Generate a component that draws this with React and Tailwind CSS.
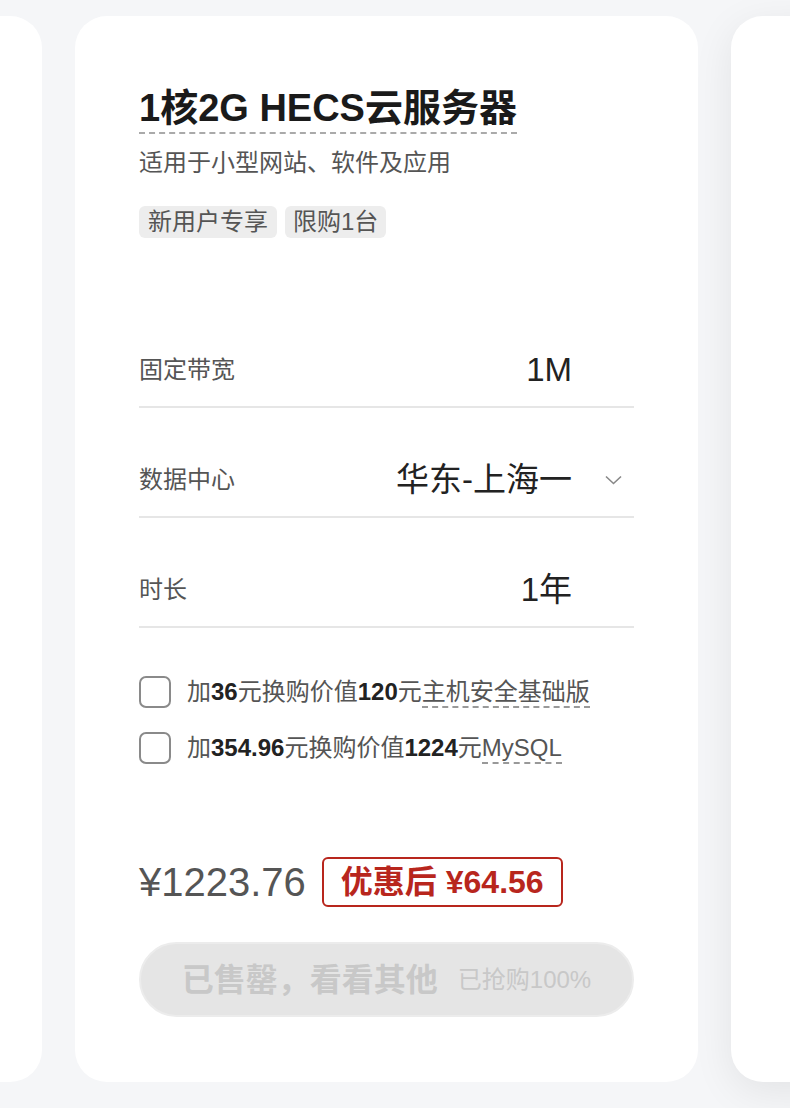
import React from 'react';

const font = { fontFamily: '"Liberation Sans", "Noto Sans CJK SC", sans-serif' };

// 配置行：左边标签，右边取值，可选下拉箭头
const SpecRow = ({ label, value, dropdown }) => (
    <div className="flex items-center justify-between h-[110px] pt-[52px] pb-[16px] border-b-2 border-[#e6e6e6]">
        <span className="text-[24px] leading-[40px] text-[#555]">{label}</span>
        <div className="flex items-center">
            <span className="text-[33px] leading-[40px] text-[#222]">{value}</span>
            <div className="w-[62px] flex justify-end pr-[12px]">
                {dropdown && (
                    <svg width="17" height="10" viewBox="0 0 17 10" fill="none">
                        <path d="M1 1.5L8.5 8.5L16 1.5" stroke="#888" strokeWidth="1.6" />
                    </svg>
                )}
            </div>
        </div>
    </div>
);

const Check = ({ children }) => (
    <label className="flex items-center h-[32px]">
        <span className="w-[32px] h-[32px] rounded-[7px] border-2 border-[#8a8a8a] bg-white shrink-0" />
        <span className="ml-[16px] text-[24px] leading-[32px] text-[#555] whitespace-nowrap">{children}</span>
    </label>
);

const Dashed = ({ children }) => (
    <span className="border-b-2 border-dashed border-[#999] leading-[28px] inline-block">{children}</span>
);

export default function App() {
    return (
        <div className="min-h-[1108px] bg-[#f5f6f8] overflow-hidden" style={font}>
            <div className="flex gap-[33px] pt-[16px]">
                {/* 左侧露出的卡片 */}
                <div className="w-[623px] h-[1066px] -ml-[581px] bg-white rounded-[32px] shrink-0" />

                {/* 中间卡片 */}
                <div className="w-[623px] h-[1066px] bg-white rounded-[32px] shrink-0 px-[64px] pt-[68px]">
                    <h2 className="inline-block text-[38px] leading-[48px] font-bold text-[#1a1a1a] border-b-2 border-dashed border-[#aaa]">
                        1核2G HECS云服务器
                    </h2>
                    <p className="mt-[13px] text-[24px] leading-[32px] text-[#555]">适用于小型网站、软件及应用</p>
                    <div className="flex gap-[8px] mt-[27px]">
                        <span className="px-[9px] h-[32px] leading-[32px] rounded-[6px] bg-[#ededed] text-[24px] text-[#555]">新用户专享</span>
                        <span className="px-[8px] h-[32px] leading-[32px] rounded-[6px] bg-[#ededed] text-[24px] text-[#555]">限购1台</span>
                    </div>

                    <div className="mt-[60px]">
                        <SpecRow label="固定带宽" value="1M" />
                        <SpecRow label="数据中心" value="华东-上海一" dropdown />
                        <SpecRow label="时长" value="1年" />
                    </div>

                    <div className="mt-[48px] flex flex-col gap-[24px]">
                        <Check>
                            加<b className="text-[#222]">36</b>元换购价值<b className="text-[#222]">120</b>元<Dashed>主机安全基础版</Dashed>
                        </Check>
                        <Check>
                            加<b className="text-[#222]">354.96</b>元换购价值<b className="text-[#222]">1224</b>元<Dashed>MySQL</Dashed>
                        </Check>
                    </div>

                    <div className="mt-[93px] flex items-center">
                        <span className="text-[40px] leading-[50px] text-[#555]">¥1223.76</span>
                        <span className="ml-[16px] h-[50px] px-[17px] flex items-center border-2 border-[#b8261d] rounded-[6px] text-[32px] font-bold text-[#b8261d]">
                            优惠后 ¥64.56
                        </span>
                    </div>

                    <div className="mt-[35px] h-[75px] rounded-full bg-[#e5e5e5] border-2 border-[#ececec] flex items-center justify-center">
                        <span className="text-[32px] font-bold text-[#c8c8c8]">已售罄，看看其他</span>
                        <span className="ml-[20px] text-[24px] text-[#c8c8c8]">已抢购100%</span>
                    </div>
                </div>

                {/* 右侧露出的卡片 */}
                <div className="w-[623px] h-[1066px] bg-white rounded-[32px] shrink-0 shadow-[0_10px_40px_rgba(0,0,0,0.08)]" />
            </div>
        </div>
    );
}
